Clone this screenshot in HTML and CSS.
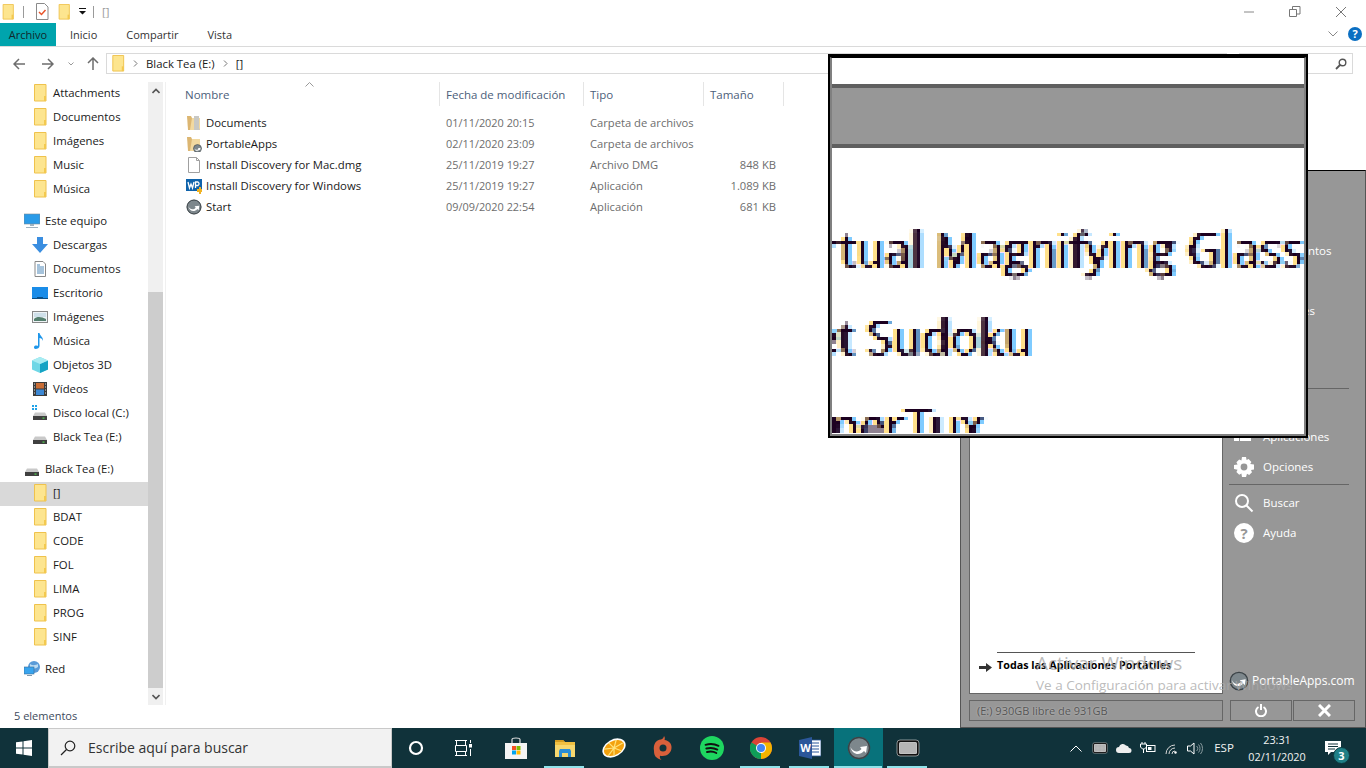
FILE: index.html
```html
<!DOCTYPE html>
<html lang="es">
<head>
<meta charset="utf-8">
<title>Black Tea (E:)</title>
<link rel="stylesheet" href="styles.css">
</head>
<body>
<svg class="sprite" width="0" height="0" aria-hidden="true">
  <defs>
    <filter id="pix" x="0" y="0" width="100%" height="100%" color-interpolation-filters="sRGB">
      <feFlood x="2" y="2" width="1" height="1" flood-color="#000"/>
      <feComposite width="4" height="4"/>
      <feTile result="a"/>
      <feComposite in="SourceGraphic" in2="a" operator="in"/>
      <feMorphology operator="dilate" radius="2"/>
    </filter>
    <symbol id="folder" viewBox="0 0 14 18">
      <path d="M1.500 .5h11.500v16.500h-11.500z" fill="#fde58f" stroke="#efc24c"/>
      <path d="M11 17v-5h2v5z" fill="#f3c94f"/>
    </symbol>
    <symbol id="pa" viewBox="0 0 24 24">
      <circle cx="12" cy="12" r="11" fill="#7d878c"/>
      <circle cx="12" cy="12" r="10.500" fill="none" stroke="#3c4347" stroke-width="1.500"/>
      <path d="M3.500 11c2 5 8 6 11 2l-1.500-2 7-1-1 7-2-2c-4 5-12 4-13.500-4z" fill="#fff"/>
    </symbol>
    <symbol id="drive" viewBox="0 0 16 16">
      <path d="M3 7.500h10l2 3.500H1z" fill="#c9c9c9"/>
      <rect x="1" y="11" width="14" height="4" fill="#3f3f3f"/>
      <rect x="10.500" y="12.500" width="2" height="1.200" fill="#4fd24f"/>
    </symbol>
    <symbol id="chip" viewBox="0 0 24 18">
      <rect x="1" y="1" width="22" height="16" rx="3" fill="#111" stroke="#ddd" stroke-width=".6"/>
      <rect x="3" y="3" width="18" height="12" rx="1.500" fill="#d6d6d6"/>
      <path d="M3 5h18M3 7h18M3 9h18M3 11h18M3 13h18M5 3v12M7 3v12M9 3v12M11 3v12M13 3v12M15 3v12M17 3v12M19 3v12" stroke="#9d9d9d" stroke-width=".7"/>
    </symbol>
  </defs>
</svg>

<main class="explorer">
  <div class="qat">
    <svg class="qat-folder" width="14" height="16"><use href="#folder"/></svg>
    <span class="qat-sep"></span>
    <svg class="qat-doc" width="14" height="17" viewBox="0 0 14 17"><path d="M1.500.5h8l3.500 3.500v12.500h-11.500z" fill="#fff" stroke="#8a8a8a"/><path d="M4 9l2.500 2.500 4-4.500" fill="none" stroke="#e8542b" stroke-width="1.500"/></svg>
    <svg class="qat-folder2" width="14" height="16"><use href="#folder"/></svg>
    <svg class="qat-drop" width="8" height="7" viewBox="0 0 8 7"><path d="M0 0h7v1H0zM0 3h7L3.500 6.500z" fill="#111"/></svg>
    <span class="qat-sep qat-sep2"></span>
    <span class="qat-title">[]</span>
    <div class="winbtns">
      <svg width="12" height="12" viewBox="0 0 12 12"><path d="M1 6h10" stroke="#888"/></svg>
      <svg width="12" height="12" viewBox="0 0 12 12"><path d="M.5 3.500h7v7h-7zM3.500 3.500v-3h7.500v7.500h-3.500" fill="none" stroke="#777"/></svg>
      <svg width="12" height="12" viewBox="0 0 12 12"><path d="M1 1l10 10M11 1L1 11" stroke="#777"/></svg>
    </div>
  </div>

  <nav class="ribbon">
    <span class="tab tab-file">Archivo</span>
    <span class="tab tab-home">Inicio</span>
    <span class="tab tab-share">Compartir</span>
    <span class="tab tab-view">Vista</span>
    <svg class="ribbon-chev" width="10" height="6" viewBox="0 0 10 6"><path d="M.5.500L5 5 9.500.5" fill="none" stroke="#888"/></svg>
    <svg class="ribbon-help" width="14" height="14" viewBox="0 0 14 14"><circle cx="7" cy="7" r="7" fill="#0b6fc2"/><text x="7" y="11" text-anchor="middle" class="help-q">?</text></svg>
  </nav>

  <div class="navbar">
    <svg class="nav-back" width="12" height="12" viewBox="0 0 12 12"><path d="M6 1L1 6l5 5M1 6h11" fill="none" stroke="#6d6d6d" stroke-width="1.500"/></svg>
    <svg class="nav-fwd" width="12" height="12" viewBox="0 0 12 12"><path d="M6 1l5 5-5 5M11 6H0" fill="none" stroke="#6d6d6d" stroke-width="1.500"/></svg>
    <svg class="nav-more" width="6" height="4" viewBox="0 0 6 4"><path d="M.5.500L3 3 5.500.5" fill="none" stroke="#999"/></svg>
    <svg class="nav-up" width="12" height="13" viewBox="0 0 12 13"><path d="M1 6l5-5 5 5M6 1v12" fill="none" stroke="#6d6d6d" stroke-width="1.500"/></svg>
    <div class="addr">
      <svg class="addr-folder" width="14" height="17"><use href="#folder"/></svg>
      <svg class="crumb" width="5" height="7" viewBox="0 0 5 7"><path d="M1 .5L4 3.500 1 6.500" fill="none" stroke="#777"/></svg>
      <span class="crumb-drive">Black Tea (E:)</span>
      <svg class="crumb" width="5" height="7" viewBox="0 0 5 7"><path d="M1 .5L4 3.500 1 6.500" fill="none" stroke="#777"/></svg>
      <span class="crumb-dir">[]</span>
    </div>
    <div class="search-box">
      <svg width="12" height="12" viewBox="0 0 12 12"><circle cx="7.500" cy="4.500" r="3.300" fill="none" stroke="#555" stroke-width="1.400"/><path d="M5 7l-4 4" stroke="#555" stroke-width="1.800"/></svg>
    </div>
  </div>

  <div class="content">
    <aside class="tree">
      <div class="tree-scroll">
        <div class="tree-group">
          <div class="row child"><svg width="14" height="18"><use href="#folder"/></svg><span>Attachments</span></div>
          <div class="row child"><svg width="14" height="18"><use href="#folder"/></svg><span>Documentos</span></div>
          <div class="row child"><svg width="14" height="18"><use href="#folder"/></svg><span>Imágenes</span></div>
          <div class="row child"><svg width="14" height="18"><use href="#folder"/></svg><span>Music</span></div>
          <div class="row child"><svg width="14" height="18"><use href="#folder"/></svg><span>Música</span></div>
        </div>
        <div class="tree-group">
          <div class="row head"><svg width="16" height="16" viewBox="0 0 16 16"><rect x="0" y="1" width="16" height="10" fill="#2a9be8" stroke="#7a8a94" stroke-width=".6"/><path d="M6 11h4v2H6zM2 14h12v1H2z" fill="#9fb2bf"/></svg><span>Este equipo</span></div>
          <div class="row child wide"><svg width="16" height="16" viewBox="0 0 16 16"><path d="M5 0h6v7h5l-8 9-8-9h5z" fill="#3a8ee0"/></svg><span>Descargas</span></div>
          <div class="row child wide"><svg width="16" height="16" viewBox="0 0 16 16"><path d="M3 .5h8l2.500 2.500v12.500H3z" fill="#fff" stroke="#888"/><path d="M5 4h3M5 6h7M5 8h7M5 10h7M5 12h7" stroke="#4d87b8"/></svg><span>Documentos</span></div>
          <div class="row child wide"><svg width="16" height="16" viewBox="0 0 16 16"><rect y="2" width="16" height="12" fill="#1a8ce8"/><rect y="13" width="16" height="1" fill="#0b4f86"/><rect x="5" y="12" width="6" height="1" fill="#0b4f86"/></svg><span>Escritorio</span></div>
          <div class="row child wide"><svg width="16" height="16" viewBox="0 0 16 16"><rect x=".5" y="2.500" width="15" height="11" fill="#eef3f6" stroke="#888"/><path d="M2 10c3-3 8-2 12 0v2H2z" fill="#55806f"/><path d="M2 4h12v4H2z" fill="#cfe0ea"/></svg><span>Imágenes</span></div>
          <div class="row child wide"><svg width="16" height="16" viewBox="0 0 16 16"><path d="M6 0h1.500c.500 3 4 4 3.500 8-.500-2-2-3-3.500-3v8c0 2-2 3-4 3s-2-3 0-3.500c1-.3 2 0 2.500.300z" fill="#1e96ea"/></svg><span>Música</span></div>
          <div class="row child wide"><svg width="16" height="16" viewBox="0 0 16 16"><path d="M8 0l8 3.500v9L8 16l-8-3.500v-9z" fill="#6fd7e6"/><path d="M8 7l8-3.500v9L8 16z" fill="#16a3c4"/><path d="M8 7L0 3.500 8 0l8 3.500z" fill="#a8ecf2"/></svg><span>Objetos 3D</span></div>
          <div class="row child wide"><svg width="16" height="16" viewBox="0 0 16 16"><rect x="1" y="1" width="14" height="14" fill="#3b3b3b"/><rect x="4" y="2" width="8" height="5.500" fill="#c96d35"/><rect x="4" y="8.500" width="8" height="5.500" fill="#3c88d4"/><path d="M2 3h1M2 6h1M2 9h1M2 12h1M13 3h1M13 6h1M13 9h1M13 12h1" stroke="#ddd"/></svg><span>Vídeos</span></div>
          <div class="row child wide"><svg width="16" height="16" viewBox="0 0 16 16"><use href="#drive"/><path d="M0 0h2v2H0zM3 0h2v2H3zM0 3h2v2H0zM3 3h2v2H3z" fill="#1fa2e8"/></svg><span>Disco local (C:)</span></div>
          <div class="row child wide"><svg width="16" height="16"><use href="#drive"/></svg><span>Black Tea (E:)</span></div>
        </div>
        <div class="tree-group">
          <div class="row head"><svg width="16" height="16"><use href="#drive"/></svg><span>Black Tea (E:)</span></div>
          <div class="row child selected"><svg width="14" height="18"><use href="#folder"/></svg><span>[]</span></div>
          <div class="row child"><svg width="14" height="18"><use href="#folder"/></svg><span>BDAT</span></div>
          <div class="row child"><svg width="14" height="18"><use href="#folder"/></svg><span>CODE</span></div>
          <div class="row child"><svg width="14" height="18"><use href="#folder"/></svg><span>FOL</span></div>
          <div class="row child"><svg width="14" height="18"><use href="#folder"/></svg><span>LIMA</span></div>
          <div class="row child"><svg width="14" height="18"><use href="#folder"/></svg><span>PROG</span></div>
          <div class="row child"><svg width="14" height="18"><use href="#folder"/></svg><span>SINF</span></div>
        </div>
        <div class="tree-group">
          <div class="row head"><svg width="16" height="16" viewBox="0 0 16 16"><circle cx="10" cy="6" r="6" fill="#5a9bd8"/><path d="M6 3c3 2 6 1 8 0v3c-3 2-6 2-8 0z" fill="#bcdcf2"/><rect x="0" y="6" width="10" height="7" fill="#38a4ee" stroke="#3a6c96" stroke-width=".6"/><path d="M3 14h5v1H3z" fill="#7f99ac"/></svg><span>Red</span></div>
        </div>
      </div>
      <div class="scrollbar">
        <div class="sb-btn"><svg width="8" height="6" viewBox="0 0 8 6"><path d="M.5 5L4 1.500 7.500 5" fill="none" stroke="#555" stroke-width="1.600"/></svg></div>
        <div class="sb-track"><div class="sb-thumb"></div></div>
        <div class="sb-btn"><svg width="8" height="6" viewBox="0 0 8 6"><path d="M.5 1L4 4.500 7.500 1" fill="none" stroke="#555" stroke-width="1.600"/></svg></div>
      </div>
    </aside>

    <section class="files">
      <svg class="sort-caret" width="9" height="5" viewBox="0 0 9 5"><path d="M.5 4.500L4.500.5l4 4" fill="none" stroke="#999"/></svg>
      <div class="file-row file-head">
        <span class="cell">Nombre</span>
        <span class="cell">Fecha de modificación</span>
        <span class="cell">Tipo</span>
        <span class="cell">Tamaño</span>
      </div>
      <div class="file-row">
        <span class="name"><svg width="16" height="16" viewBox="0 0 16 16"><path d="M1 1h4l1 2v12H2z" fill="#dcb672"/><path d="M6 3h8v12H4z" fill="#f2d9a0"/><path d="M8 1h5v12l1 2H8z" fill="#c8c8c4"/></svg>Documents</span>
        <span class="date">01/11/2020 20:15</span><span class="type">Carpeta de archivos</span><span class="size"></span>
      </div>
      <div class="file-row">
        <span class="name"><svg width="16" height="16" viewBox="0 0 16 16"><path d="M1 1h4l1 2v12H2z" fill="#dcb672"/><path d="M6 3h8v12H4z" fill="#f2d9a0"/><use href="#pa" x="7" y="8" width="9" height="9"/></svg>PortableApps</span>
        <span class="date">02/11/2020 23:09</span><span class="type">Carpeta de archivos</span><span class="size"></span>
      </div>
      <div class="file-row">
        <span class="name"><svg width="16" height="16" viewBox="0 0 16 16"><path d="M2.500.5h8l3 3v12h-11z" fill="#fff" stroke="#a0a0a0"/><path d="M10.500.5v3h3" fill="none" stroke="#a0a0a0"/></svg>Install Discovery for Mac.dmg</span>
        <span class="date">25/11/2019 19:27</span><span class="type">Archivo DMG</span><span class="size">848 KB</span>
      </div>
      <div class="file-row">
        <span class="name"><svg width="16" height="16" viewBox="0 0 16 16"><rect y="1" width="16" height="12" fill="#0f63ab"/><path d="M2 4l1.500 6 1.500-4 1.500 4L8 4M9.500 10V4H12a2 2 0 010 3.500H9.500" fill="none" stroke="#fff" stroke-width="1.300"/><path d="M11 11h2V9h2v2h1v3h-1v2h-2v-2h-2z" fill="#f0b323"/></svg>Install Discovery for Windows</span>
        <span class="date">25/11/2019 19:27</span><span class="type">Aplicación</span><span class="size">1.089 KB</span>
      </div>
      <div class="file-row">
        <span class="name"><svg width="16" height="16"><use href="#pa"/></svg>Start</span>
        <span class="date">09/09/2020 22:54</span><span class="type">Aplicación</span><span class="size">681 KB</span>
      </div>
    </section>
  </div>

  <footer class="status">5 elementos</footer>
</main>

<footer class="taskbar">
  <div class="tb-start"><svg width="16" height="16" viewBox="0 0 16 16"><path d="M0 2.300l6.500-.9v6.200H0zM7.500 1.200L16 0v7.600H7.500zM0 8.500h6.500v6.100L0 13.700zM7.500 8.500H16V16l-8.500-1.200z" fill="#fff"/></svg></div>
  <div class="tb-search">
    <svg width="16" height="16" viewBox="0 0 16 16"><circle cx="10" cy="6" r="4.800" fill="none" stroke="#222" stroke-width="1.200"/><path d="M6.500 9.500L1 15" stroke="#222" stroke-width="1.300"/></svg>
    <span>Escribe aquí para buscar</span>
  </div>
  <div class="tb-item tb-cortana"><svg width="16" height="16" viewBox="0 0 16 16"><circle cx="8" cy="8" r="6" fill="none" stroke="#fff" stroke-width="2.200"/></svg></div>
  <div class="tb-item tb-tasks"><svg width="18" height="16" viewBox="0 0 18 16"><path d="M0 .5h12M0 15.500h12M.5 5.500h11v6h-11zM1.500 1v4M10.500 1v4M1.500 11.500v4M10.500 11.500v4" fill="none" stroke="#fff"/><path d="M15.500 0v3M15.500 9v7" stroke="#fff"/><rect x="14" y="4" width="3" height="3.500" fill="#fff"/></svg></div>
  <div class="tb-item tb-app"><svg width="24" height="24" viewBox="0 0 24 24"><path d="M8 7V3.500c0-2 8-2 8 0V7" fill="none" stroke="#ddd" stroke-width="1.200"/><rect x="1" y="7" width="22" height="16" fill="#f4f4f4"/><rect x="8" y="10" width="4" height="4" fill="#f25022"/><rect x="12.500" y="10" width="4" height="4" fill="#7fba00"/><rect x="8" y="14.500" width="4" height="4" fill="#00a4ef"/><rect x="12.500" y="14.500" width="4" height="4" fill="#ffb900"/></svg></div>
  <div class="tb-item tb-app on"><svg width="22" height="20" viewBox="0 0 22 20"><path d="M1 2h8l2 2h10v15H1z" fill="#f0c042"/><path d="M1 2h8l2 2H1z" fill="#d49c20"/><path d="M1 7h20v12H1z" fill="#f6d76e"/><path d="M5 19v-6l1-2h10l1 2v6h-3v-4H8v4z" fill="#2a8ed6"/></svg></div>
  <div class="tb-item tb-app"><svg width="24" height="24" viewBox="0 0 24 24"><g transform="rotate(-30 12 12)"><ellipse cx="12" cy="12" rx="12.500" ry="8.500" fill="#fff"/><ellipse cx="12" cy="12" rx="10.800" ry="7" fill="#f4a20e"/><path d="M12 12L3 8M12 12l-2-7M12 12l6-6M12 12h10M12 12l5 6M12 12l-4 7M12 12L3 16" stroke="#ffe27a" stroke-width="1.200"/></g></svg></div>
  <div class="tb-item tb-app"><svg width="20" height="24" viewBox="0 0 20 24"><path d="M11 0c1 1.500 1 2.500.5 4C16 4.500 19 8 18.500 12c-.3 4.500-4 8-9 8-1 0-1.500 0-2.500-.300C6.500 21.500 7 22.500 8.500 24 3 22 1 20 1 15 0 8 3 4 8 3.500 9.500 3 11 1.500 11 0z" fill="#d9603b"/><circle cx="10" cy="12" r="3.500" fill="#11333a"/></svg></div>
  <div class="tb-item tb-app"><svg width="24" height="24" viewBox="0 0 24 24"><circle cx="12" cy="12" r="12" fill="#1ed760"/><path d="M5.500 8.800c4.500-1.300 9-1 13 1M6.300 12.500c4-1 7.500-.8 11 1.100M7 16c3.500-.8 6.500-.6 9.300 1" fill="none" stroke="#111" stroke-width="1.900" stroke-linecap="round"/></svg></div>
  <div class="tb-item tb-app on"><svg width="22" height="22" viewBox="0 0 22 22"><circle cx="11" cy="11" r="11" fill="#db4437"/><path d="M11 11L1.500 5.500A11 11 0 002 17.500 11 11 0 0011 22z" fill="#0f9d58"/><path d="M11 11v11A11 11 0 0022 11 11 11 0 0020.500 5.500H11z" fill="#f4b400"/><circle cx="11" cy="11" r="5" fill="#fff"/><circle cx="11" cy="11" r="4" fill="#4285f4"/></svg></div>
  <div class="tb-item tb-app on"><svg width="22" height="22" viewBox="0 0 22 22"><rect x="9" y="3" width="13" height="16" fill="#fff" stroke="#2b579a" stroke-width=".8"/><path d="M13 6h7M13 9h7M13 12h7M13 15h7" stroke="#2b579a"/><path d="M0 3l13-3v22L0 19z" fill="#2b579a"/><text x="6.500" y="14.500" text-anchor="middle" class="word-w">W</text></svg></div>
  <div class="tb-item tb-app active"><svg width="24" height="24"><use href="#pa"/></svg></div>
  <div class="tb-item tb-app on"><svg width="24" height="18"><use href="#chip"/></svg></div>
  <div class="tb-spacer"></div>
  <div class="tray">
    <div class="tray-i"><svg width="12" height="7" viewBox="0 0 12 7"><path d="M.5 6.500L6 1l5.500 5.500" fill="none" stroke="#fff"/></svg></div>
    <div class="tray-i"><svg width="16" height="12" viewBox="0 0 24 18"><use href="#chip"/></svg></div>
    <div class="tray-i"><svg width="16" height="10" viewBox="0 0 16 10"><path d="M3 10a3 3 0 010-6 4 4 0 017-1.500A3 3 0 0113 5a2.500 2.500 0 010 5z" fill="#eee"/></svg></div>
    <div class="tray-i"><svg width="16" height="12" viewBox="0 0 16 12"><path d="M2 0v2M5 0v2M.5 2h6v3l-2 2h-2l-2-2zM3.500 7v4" fill="none" stroke="#fff"/><rect x="6.500" y="3.500" width="8.500" height="6" fill="none" stroke="#fff"/><rect x="8" y="5" width="3.500" height="3" fill="#fff"/></svg></div>
    <div class="tray-i"><svg width="14" height="12" viewBox="0 0 14 12"><path d="M1 12a9 9 0 019-9M4 12a6 6 0 016-6M7 12a3 3 0 013-3" fill="none" stroke="#d8d8d8"/><circle cx="10.500" cy="10.500" r="1.200" fill="#fff"/></svg></div>
    <div class="tray-i tray-vol"><svg width="17" height="13" viewBox="0 0 17 13"><path d="M.5 4h3L7 1v11L3.500 9h-3z" fill="none" stroke="#fff"/><path d="M9.500 4a3 3 0 010 5M11.500 2.500a6 6 0 010 8M13.500 1a8.500 8.500 0 010 11" fill="none" stroke="#8b9ca0"/></svg></div>
    <div class="tray-lang">ESP</div>
    <div class="tray-clock"><span>23:31</span><span>02/11/2020</span></div>
    <div class="tray-notif">
      <svg width="16" height="14" viewBox="0 0 16 14"><path d="M0 0h16v11H6l-3 3v-3H0z" fill="#fff"/><path d="M3 3h10M3 5.500h10M3 8h7" stroke="#11333a"/></svg>
      <span class="notif-badge">3</span>
    </div>
    <div class="tray-end"></div>
  </div>
</footer>

<section class="pa-menu">
  <div class="pa-main">
    <div class="pa-left">
      <div class="pa-all">
        <svg width="13" height="9" viewBox="0 0 13 9"><path d="M0 3h7V0l6 4.500L7 9V6H0z" fill="#333"/></svg>
        <span>Todas las Aplicaciones Portátiles</span>
      </div>
    </div>
    <div class="pa-right">
      <div class="pa-row">Documentos</div>
      <div class="pa-row">Música</div>
      <div class="pa-row">Imágenes</div>
      <div class="pa-row">Vídeos</div>
      <div class="pa-row">Juegos</div>
      <hr class="pa-sep">
      <div class="pa-row pa-icon">Explorar</div>
      <div class="pa-row pa-icon"><svg width="17" height="16" viewBox="0 0 17 16"><path d="M0 1h5v3H0zM6 1h11v3H6zM0 6h5v3H0zM6 6h11v3H6zM0 11h5v3H0zM6 11h11v3H6z" fill="#fff"/></svg>Aplicaciones</div>
      <div class="pa-row pa-icon"><svg width="20" height="20" viewBox="0 0 20 20"><path d="M8 0h4l.6 3 2-.9 2.800 2.800-1.200 2.100 3.800.6v4.800l-3 .6 1 2.200-2.800 2.800-2.200-1.200L12 20H8l-.6-3.400-2.200 1.200-2.800-2.800 1.200-2.200L0 12V8l3.600-.6-1.200-2.200L5.200 2.400l2.200 1.200z" fill="#fff"/><circle cx="10" cy="10" r="3.400" fill="#979797"/></svg>Opciones</div>
      <hr class="pa-sep pa-sep2">
      <div class="pa-row pa-icon"><svg width="20" height="20" viewBox="0 0 20 20"><circle cx="8" cy="8" r="6" fill="none" stroke="#fff" stroke-width="2"/><path d="M12.500 12.500l6 6" stroke="#fff" stroke-width="2"/></svg>Buscar</div>
      <div class="pa-row pa-icon"><svg width="20" height="20" viewBox="0 0 20 20"><circle cx="10" cy="10" r="10" fill="#fff"/><text x="10" y="15.500" text-anchor="middle" class="pa-q">?</text></svg>Ayuda</div>
      <div class="pa-logo"><svg width="20" height="20"><use href="#pa"/></svg><span>PortableApps.com</span></div>
    </div>
  </div>
  <div class="pa-foot">
    <div class="pa-disk">(E:) 930GB libre de 931GB</div>
    <div class="pa-btn"><svg width="12" height="13" viewBox="0 0 12 13"><path d="M3.500 3a5 5 0 105 0" fill="none" stroke="#fff" stroke-width="2"/><path d="M6 0v6" stroke="#fff" stroke-width="2"/></svg></div>
    <div class="pa-btn pa-btn2"><svg width="13" height="13" viewBox="0 0 13 13"><path d="M1 1l11 11M12 1L1 12" stroke="#fff" stroke-width="3"/></svg></div>
  </div>
</section>

<div class="watermark">
  <p class="wm-title">Activar Windows</p>
  <p class="wm-sub">Ve a Configuración para activar Windows</p>
</div>

<section class="magnifier">
  <div class="mag-inner">
    <div class="mag-top"></div>
    <div class="mag-band"></div>
    <div class="mag-body">
      <p class="mag-line mag-l1">Virtual Magnifying Glass</p>
      <p class="mag-line mag-l2">Pocket Sudoku</p>
      <p class="mag-line mag-l3">SuperTux</p>
    </div>
  </div>
</section>
</body>
</html>
```

FILE: styles.css
```css
* { box-sizing: border-box; }
html, body { margin: 0; height: 100%; }
body {
  width: 1366px;
  height: 768px;
  overflow: hidden;
  display: flex;
  flex-direction: column;
  position: relative;
  background: #fff;
  color: #1a1a1a;
  font: 11.350px/16px "Open Sans", "Noto Sans", sans-serif;
}
svg { display: block; flex: none; }
.sprite { position: absolute; }
p { margin: 0; }

.explorer { flex: 1; display: flex; flex-direction: column; min-height: 0; }

/* quick access bar */
.qat { height: 23px; display: flex; align-items: center; flex: none; }
.qat-folder { margin-left: 1px; }
.qat-sep { width: 1px; height: 12px; background: #9a9a9a; margin-left: 8px; }
.qat-doc { margin-left: 11px; }
.qat-folder2 { margin-left: 8px; }
.qat-drop { margin-left: 8px; }
.qat-sep2 { margin-left: 6px; height: 12px; }
.qat-title { margin-left: 8px; color: #9a9a9a; }
.winbtns { margin-left: auto; margin-right: 19px; display: flex; gap: 34px; }

/* ribbon */
.ribbon { height: 24px; flex: none; display: flex; align-items: stretch; border-bottom: 1px solid #dadada; position: relative; font-size: 11px; }
.tab { display: flex; align-items: center; color: #333; }
.tab-file { width: 56px; justify-content: center; background: #00a4ad; color: #10282c; }
.tab-home { margin-left: 14px; }
.tab-share { margin-left: 29px; }
.tab-view { margin-left: 29px; }
.ribbon-chev { margin: 8px 0 0 auto; }
.ribbon-help { margin: 4px 4px 0 10px; }
.help-q { font: 700 11px "Open Sans", sans-serif; fill: #fff; }

/* nav */
.navbar { height: 35px; flex: none; display: flex; align-items: flex-start; padding-top: 6px; }
.nav-back { margin: 5px 0 0 13px; }
.nav-fwd { margin: 5px 0 0 17px; }
.nav-more { margin: 9px 0 0 14px; }
.nav-up { margin: 4px 0 0 13px; }
.addr { width: 1121px; height: 21px; margin-left: 7px; border: 1px solid #dadada; display: flex; align-items: center; }
.addr-folder { margin-left: 4px; }
.addr .crumb { margin-left: 8px; }
.crumb-drive { margin-left: 8px; }
.crumb-drive + .crumb { margin-left: 8px; }
.crumb-dir { margin-left: 8px; }
.search-box { width: 114px; height: 21px; margin-left: 12px; border: 1px solid #dadada; display: flex; align-items: center; justify-content: flex-end; padding-right: 5px; }

/* main */
.content { flex: 1; display: flex; min-height: 0; }
.tree { width: 166px; flex: none; display: flex; border-right: 1px solid #f0f0f0; }
.tree-scroll { width: 148px; flex: none; }
.tree-group { margin-bottom: 8px; }
.row { height: 24px; display: flex; align-items: center; padding-bottom: 2px; color: #1a1a1a; }
.row.head { padding-left: 24px; gap: 5px; }
.row.child { padding-left: 33px; gap: 6px; }
.row.child.wide { padding-left: 32px; gap: 5px; }
.row.selected { background: #d9d9d9; }
.scrollbar { width: 15px; flex: none; display: flex; flex-direction: column; background: #f0f0f0; }
.sb-btn { height: 17px; flex: none; display: flex; align-items: center; justify-content: center; }
.sb-track { flex: 1; display: flex; flex-direction: column; justify-content: flex-end; }
.sb-thumb { height: 396px; background: #cdcdcd; }

.files { flex: 1; position: relative; padding-left: 19px; }
.sort-caret { position: absolute; left: 139px; top: 0; }
.file-row { display: grid; grid-template-columns: 255px 144px 120px 80px; height: 21px; align-items: center; }
.file-head { height: 31px; align-items: stretch; font-size: 11.500px; color: #4c607a; }
.cell { display: flex; align-items: center; padding: 2px 0 0 6px; border-right: 1px solid #e5e5e5; margin-bottom: 7px; }
.cell:first-child { padding-left: 0; }
.name { display: flex; align-items: center; gap: 4px; padding: 0 0 1px 1px; color: #1a1a1a; }
.date { padding: 0 0 1px 6px; color: #6d6d6d; font-size: 10.900px; }
.type { padding: 0 0 1px 6px; color: #6d6d6d; font-size: 11.200px; }
.size { text-align: right; padding: 0 8px 1px 0; color: #6d6d6d; font-size: 11.200px; }
.status { height: 23px; flex: none; padding: 3px 0 0 14px; font-size: 11px; color: #3d4a5c; }

/* taskbar */
.taskbar { height: 40px; flex: none; background: #10323a; display: flex; align-items: stretch; color: #fff; }
.tb-start { width: 48px; display: flex; align-items: center; justify-content: center; }
.tb-search { width: 344px; background: #f2f2f2; border: 1px solid #c9c9c9; border-bottom-width: 2px; display: flex; align-items: center; padding-left: 11px; gap: 12px; color: #333; font-size: 14px; }
.tb-item { display: flex; align-items: center; justify-content: center; position: relative; }
.tb-cortana { width: 48px; }
.tb-tasks { width: 51px; padding-right: 3px; }
.tb-app { width: 49px; }
.tb-app.on::after { content: ""; position: absolute; left: 4px; right: 5px; bottom: 0; height: 2px; background: #8fe3ea; }
.tb-app.active { background: #08727b; }
.tb-app.active::after { content: ""; position: absolute; left: 0; right: 1px; bottom: 0; height: 2px; background: #8fe3ea; }
.tb-spacer { flex: 1; }
.word-w { font: 700 11px "Open Sans", sans-serif; fill: #fff; }
.tray { display: flex; align-items: stretch; }
.tray-i { width: 24px; display: flex; align-items: center; justify-content: center; }
.tray-vol { width: 23px; }
.tray-lang { width: 34px; display: flex; align-items: center; justify-content: center; font-size: 11.500px; color: #f2f2f2; }
.tray-clock { width: 72px; display: flex; flex-direction: column; align-items: center; justify-content: center; gap: 1px; font-size: 10.800px; line-height: 16px; color: #f2f2f2; }
.tray-notif { width: 40px; display: flex; align-items: center; justify-content: center; position: relative; }
.notif-badge { position: absolute; left: 20px; top: 19px; width: 17px; height: 17px; border-radius: 50%; background: #1f7f86; border: 1px solid #0d3a40; font: 700 11px/15px "Open Sans", sans-serif; text-align: center; color: #fff; }
.tray-end { width: 13px; }

/* PortableApps menu */
.pa-menu { position: absolute; left: 960px; top: 170px; width: 406px; height: 558px; background: #979797; border: 1px solid #555; border-top-color: #000; display: flex; flex-direction: column; padding: 0 10px 6px 8px; color: #fff; }
.pa-main { flex: 1; display: flex; min-height: 0; }
.pa-left { width: 254px; flex: none; margin-top: 60px; background: #fff; border: 1px solid #666; display: flex; flex-direction: column; justify-content: flex-end; color: #000; }
.pa-all { display: flex; align-items: center; gap: 5px; margin: 0 27px 20px 9px; font-weight: 700; font-size: 10.750px; position: relative; }
.pa-all span { flex: 1; border-top: 1px solid #555; padding-top: 4px; white-space: nowrap; }
.pa-all svg { margin-top: 9px; }
.pa-right { width: 126px; flex: none; margin-left: 6px; padding-top: 65px; display: flex; flex-direction: column; font-size: 11.500px; }
.pa-row { height: 30px; flex: none; display: flex; align-items: center; padding-left: 34px; white-space: nowrap; position: relative; }
.pa-icon svg { position: absolute; left: 5px; top: 5px; }
.pa-sep { width: 120px; margin: 2px 0 3px; border: 0; border-top: 1px solid #666; height: 0; }
.pa-sep2 { margin: 2px 0 3px; }
.pa-q { font: 700 15px "Open Sans", sans-serif; fill: #979797; }
.pa-logo { margin-top: auto; margin-bottom: 3px; display: flex; align-items: center; gap: 3px; font-size: 12px; }
.pa-foot { height: 21px; flex: none; display: flex; margin-top: 6px; }
.pa-disk { width: 254px; border: 1px solid #666; padding-left: 7px; font-size: 11px; line-height: 19px; color: #555; text-shadow: 0 0 2px #c8c8c8; }
.pa-btn { width: 62px; border: 1px solid #666; margin-left: 7px; display: flex; align-items: center; justify-content: center; }
.pa-btn2 { margin-left: 1px; }

/* activation watermark */
.watermark { position: absolute; left: 1036px; top: 651px; color: rgba(170,170,170,.8); pointer-events: none; }
.wm-title { font-size: 19px; line-height: 25px; }
.wm-sub { font-size: 13.500px; line-height: 18px; white-space: nowrap; }

/* magnifier */
.magnifier { position: absolute; left: 828px; top: 54px; width: 480px; height: 384px; border: 2px solid #000; border-top-width: 3px; background: #fff; }
.mag-inner { height: 100%; border: 2px solid #808080; border-top: 1px solid #000; display: flex; flex-direction: column; }
.mag-top { height: 26px; flex: none; }
.mag-band { height: 64px; flex: none; background: #979797; border-top: 4px solid #5f5f5f; border-bottom: 4px solid #5f5f5f; }
.mag-body { flex: 1; min-height: 0; overflow: hidden; padding-top: 57px; background: #fff; filter: url(#pix); }
.mag-line { font: 47px/88px "Open Sans", sans-serif; white-space: nowrap; color: #1c0020; -webkit-text-stroke: 1px #1c0020; text-shadow: -4px 0 #ffe08a, 4px 0 #7fcbff; }
.mag-l1 { margin-left: -52px; }
.mag-l2 { margin-left: -124px; }
.mag-l3 { margin-left: -56px; }
```
